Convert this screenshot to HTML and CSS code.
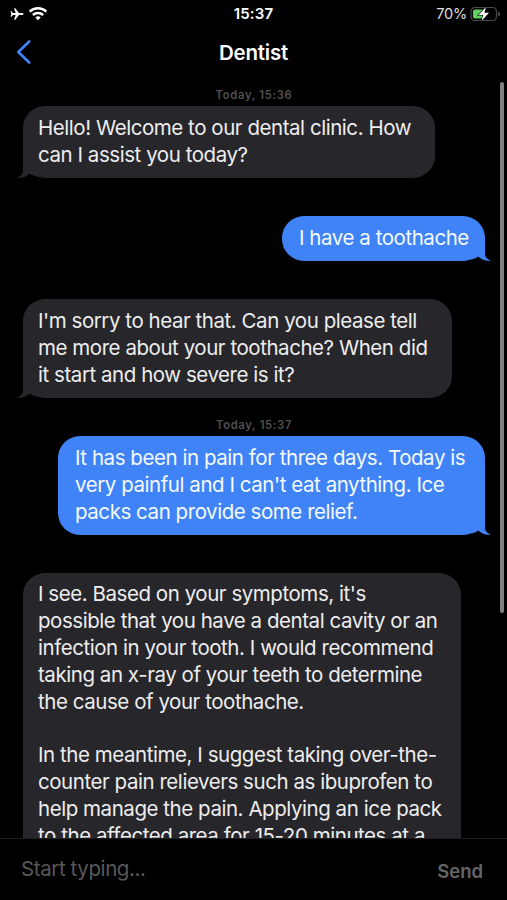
FILE: index.html
```html
<!DOCTYPE html>
<html lang="en">
<head>
    <meta charset="UTF-8">
    <meta name="viewport" content="width=device-width, initial-scale=1.0">
    <title>Dentist</title>
    <link rel="stylesheet" href="styles.css">
</head>
<body>
    <div class="phone">
        <div class="status-bar">
            <div class="status-left">
                <svg class="icon-plane" width="14" height="12" viewBox="0 0 14 12">
                    <path fill="#fff" d="M13.5 6c0-.6-.8-1-1.8-1H8.9L5.3.3H4L5.7 5H2.9L1.5 3.2H.5L1.3 6 .5 8.800h1L2.900 7h2.800L4 11.700h1.300L8.900 7h2.800c1 0 1.800-.4 1.800-1z"/>
                </svg>
                <svg class="icon-wifi" width="20" height="15" viewBox="0 0 20 15">
                    <g fill="none" stroke="#fff" stroke-width="2.500">
                        <path d="M1.700 5.700a11.900 11.900 0 0 1 16.600 0"/>
                        <path d="M4.900 9a7.300 7.300 0 0 1 10.200 0"/>
                    </g>
                    <path fill="#fff" d="M10 14.300l-2.700-2.800a3.900 3.900 0 0 1 5.400 0z"/>
                </svg>
            </div>
            <div class="status-time">15:37</div>
            <div class="status-right">
                <span class="percent">70%</span>
                <svg class="icon-battery" width="31" height="16" viewBox="0 0 31 16">
                    <rect x="1" y="1.500" width="25.500" height="13" rx="4" fill="none" stroke="#4b4b4b" stroke-width="1.200"/>
                    <path fill="#4b4b4b" d="M28 5.500c1.500.5 2.200 1.400 2.200 2.500s-.7 2-2.200 2.500z"/>
                    <path fill="#62cf62" d="M5 3.500h10v9H5a2 2 0 0 1-2-2v-5a2 2 0 0 1 2-2z"/>
                    <path fill="#fff" stroke="#000" stroke-width="1.200" paint-order="stroke" d="M16 1L8.500 9h4.700l-1.700 6 7.500-8.200h-4.600z"/>
                </svg>
            </div>
        </div>

        <header class="nav-bar">
            <svg class="icon-back" width="16" height="26" viewBox="0 0 16 26">
                <path fill="none" stroke="#3f83f7" stroke-width="2.600" stroke-linecap="round" stroke-linejoin="round" d="M13.200 2.500L2.300 13l10.900 10.500"/>
            </svg>
            <h1 class="title">Dentist</h1>
        </header>

        <main class="chat">
            <div class="date">Today, 15:36</div>
            <div class="bubble received hello">
                Hello! Welcome to our dental clinic. How<br>
                can I assist you today?
                <svg class="tail" width="20" height="24" viewBox="0 0 20 24"><path d="M6 0v17c0 3-2.500 5.500-6 6.500 4.500.8 9-.5 13-4 2 1.800 4 2.500 7 3V0z"/></svg>
            </div>
            <div class="bubble sent toothache">
                I have a toothache
                <svg class="tail" width="20" height="24" viewBox="0 0 20 24"><path d="M14 0v17c0 3 2.500 5.500 6 6.500-4.500.8-9-.5-13-4-2 1.800-4 2.500-7 3V0z"/></svg>
            </div>
            <div class="bubble received sorry">
                I'm sorry to hear that. Can you please tell<br>
                me more about your toothache? When did<br>
                it start and how severe is it?
                <svg class="tail" width="20" height="24" viewBox="0 0 20 24"><path d="M6 0v17c0 3-2.500 5.500-6 6.500 4.500.8 9-.5 13-4 2 1.800 4 2.500 7 3V0z"/></svg>
            </div>
            <div class="date">Today, 15:37</div>
            <div class="bubble sent pain">
                It has been in pain for three days. Today is<br>
                very painful and I can't eat anything. Ice<br>
                packs can provide some relief.
                <svg class="tail" width="20" height="24" viewBox="0 0 20 24"><path d="M14 0v17c0 3 2.500 5.500 6 6.500-4.500.8-9-.5-13-4-2 1.800-4 2.500-7 3V0z"/></svg>
            </div>
            <div class="bubble received advice">
                I see. Based on your symptoms, it's<br>
                possible that you have a dental cavity or an<br>
                infection in your tooth. I would recommend<br>
                taking an x-ray of your teeth to determine<br>
                the cause of your toothache.<br>
                <br>
                In the meantime, I suggest taking over-the-<br>
                counter pain relievers such as ibuprofen to<br>
                help manage the pain. Applying an ice pack<br>
                to the affected area for 15-20 minutes at a
            </div>
            <div class="scrollbar"></div>
        </main>

        <footer class="composer">
            <span class="placeholder">Start typing...</span>
            <span class="send">Send</span>
        </footer>
    </div>
</body>
</html>
```
FILE: styles.css
```css
* {
    margin: 0;
    padding: 0;
    box-sizing: border-box;
}

body {
    font-family: Inter, "Liberation Sans", sans-serif;
    background: #000;
    color: #fff;
}

.phone {
    display: flex;
    flex-direction: column;
    width: 507px;
    height: 900px;
    overflow: hidden;
}

.status-bar {
    display: grid;
    grid-template-columns: 1fr auto 1fr;
    align-items: center;
    height: 27px;
    padding: 0 6px 0 10px;
}

.status-left,
.status-right {
    display: flex;
    align-items: center;
}

.status-left {
    gap: 5px;
}

.icon-wifi {
    margin: -1px 0 0 -1px;
}

.status-time {
    margin-left: -4px;
    font-size: 15px;
    font-weight: 600;
    letter-spacing: 0.2px;
}

.status-right {
    justify-content: flex-end;
    gap: 3px;
    color: #dedede;
}

.percent {
    font-size: 14.5px;
    letter-spacing: -0.2px;
}

.nav-bar {
    display: grid;
    grid-template-columns: 40px 1fr 40px;
    align-items: center;
    height: 53px;
    padding-bottom: 3px;
}

.icon-back {
    margin-left: 16px;
}

.title {
    font-size: 20.5px;
    font-weight: 600;
    letter-spacing: -0.2px;
    text-align: center;
}

.chat {
    position: relative;
    flex: 1;
    display: flex;
    flex-direction: column;
    min-height: 0;
    padding: 8px 22px 0 23px;
    overflow: hidden;
}

.date {
    height: 15px;
    margin-bottom: 3px;
    font-size: 11.2px;
    font-weight: 600;
    line-height: 15px;
    letter-spacing: 0.7px;
    text-align: center;
    color: #505053;
}

.bubble {
    position: relative;
    flex-shrink: 0;
    padding: 8px 15px 10px;
    border-radius: 22px;
    font-size: 20.5px;
    line-height: 27px;
    letter-spacing: -0.45px;
    white-space: nowrap;
}

.received {
    align-self: flex-start;
    background: #27262b;
    color: #ededee;
}

.sent {
    align-self: flex-end;
    padding-left: 17px;
    background: #3f83f7;
    color: #f4faff;
}

.tail {
    position: absolute;
    bottom: 0;
}

.received .tail {
    left: -6px;
    fill: #27262b;
}

.sent .tail {
    right: -6px;
    fill: #3f83f7;
}

.hello {
    width: 412px;
    margin-bottom: 38px;
}

.toothache {
    width: 203px;
    margin-bottom: 38px;
}

.sorry {
    width: 429px;
    margin-bottom: 20px;
}

.pain {
    width: 427px;
    margin-bottom: 38px;
}

.advice {
    width: 438px;
    line-height: 26.9px;
}

.scrollbar {
    position: absolute;
    top: 2px;
    right: 3px;
    width: 4px;
    height: 531px;
    border-radius: 2px;
    background: #808080;
}

.composer {
    display: flex;
    align-items: center;
    justify-content: space-between;
    height: 62px;
    padding: 0 24px 2px 21px;
    border-top: 1px solid #1d1d1f;
}

.placeholder {
    font-size: 20.5px;
    letter-spacing: -0.4px;
    color: #58585a;
}

.send {
    padding-top: 4px;
    font-size: 18.5px;
    font-weight: 600;
    color: #666668;
}
```
